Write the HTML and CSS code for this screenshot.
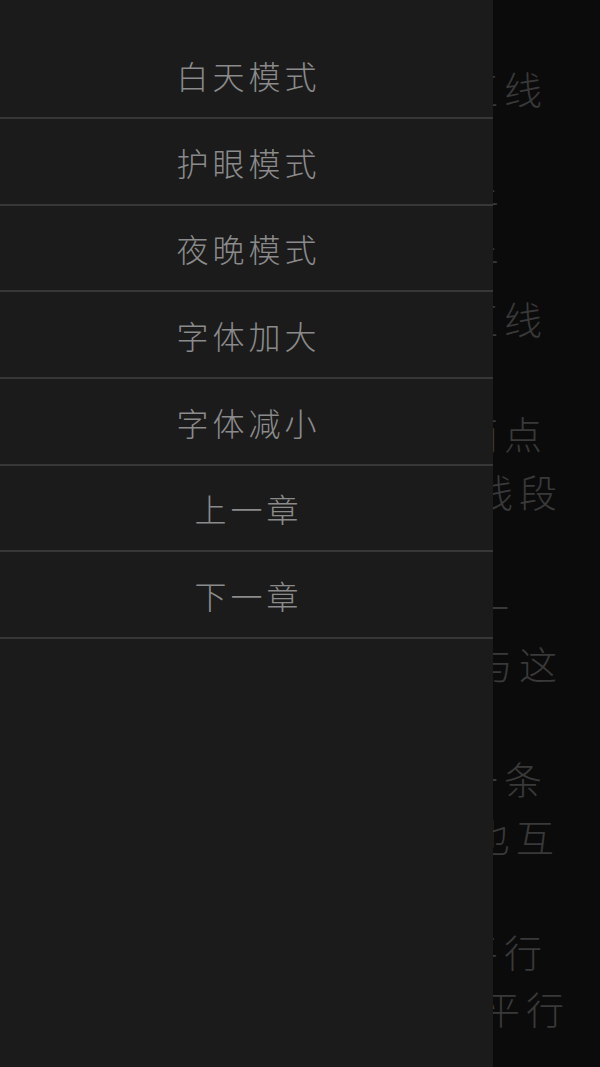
FILE: index.html
```html
<!DOCTYPE html>
<html lang="zh-CN">
<head>
<meta charset="utf-8">
<title>阅读菜单</title>
<link rel="stylesheet" href="styles.css">
</head>
<body>
<div class="screen">
  <div class="page">
    <div class="line end-543">直线</div>
    <div class="line"></div>
    <div class="line end-499">于</div>
    <div class="line end-499">于</div>
    <div class="line end-543">直线</div>
    <div class="line"></div>
    <div class="line end-543">两点</div>
    <div class="line end-557">线段</div>
    <div class="line"></div>
    <div class="line end-509">一</div>
    <div class="line end-557">与这</div>
    <div class="line"></div>
    <div class="line end-543">一条</div>
    <div class="line end-555">也互</div>
    <div class="line"></div>
    <div class="line end-543">平行</div>
    <div class="line end-565">平行</div>
  </div>

  <nav class="drawer">
    <ul class="menu">
      <li class="menu-item">白天模式</li>
      <li class="menu-item">护眼模式</li>
      <li class="menu-item">夜晚模式</li>
      <li class="menu-item">字体加大</li>
      <li class="menu-item">字体减小</li>
      <li class="menu-item">上一章</li>
      <li class="menu-item">下一章</li>
    </ul>
  </nav>
</div>
</body>
</html>
```

FILE: styles.css
```css
html, body {
  margin: 0;
  padding: 0;
  background: #0b0b0b;
}

.screen {
  position: relative;
  width: 600px;
  height: 1067px;
  overflow: hidden;
  background: #0b0b0b;
  font-family: "Noto Sans CJK SC", "Noto Sans", sans-serif;
}

.page {
  padding-top: 59px;
  color: #393939;
  font-size: 38px;
  font-weight: 300;
  letter-spacing: 6px;
}

.line {
  height: 57.5px;
  line-height: 57.5px;
  text-align: right;
  white-space: nowrap;
}

/* last glyph ends near the given x (letter-spacing trails after it) */
.end-499 { padding-right: 95px; }
.end-509 { padding-right: 85px; }
.end-543 { padding-right: 52px; }
.end-555 { padding-right: 40px; }
.end-557 { padding-right: 37px; }
.end-565 { padding-right: 30px; }

/* side drawer */
.drawer {
  position: absolute;
  left: 0;
  top: 0;
  bottom: 0;
  width: 493px;
  background: #1b1b1b;
}

.menu {
  list-style: none;
  margin: 0;
  padding: 32.3px 0 0;
}

.menu-item {
  box-sizing: border-box;
  height: 86.67px;
  border-bottom: 2px solid #373737;
  display: flex;
  align-items: center;
  justify-content: center;
  padding: 1px 0 0 4px;
  font-size: 32px;
  font-weight: 300;
  letter-spacing: 4px;
  color: #8b8b8b;
}
```
